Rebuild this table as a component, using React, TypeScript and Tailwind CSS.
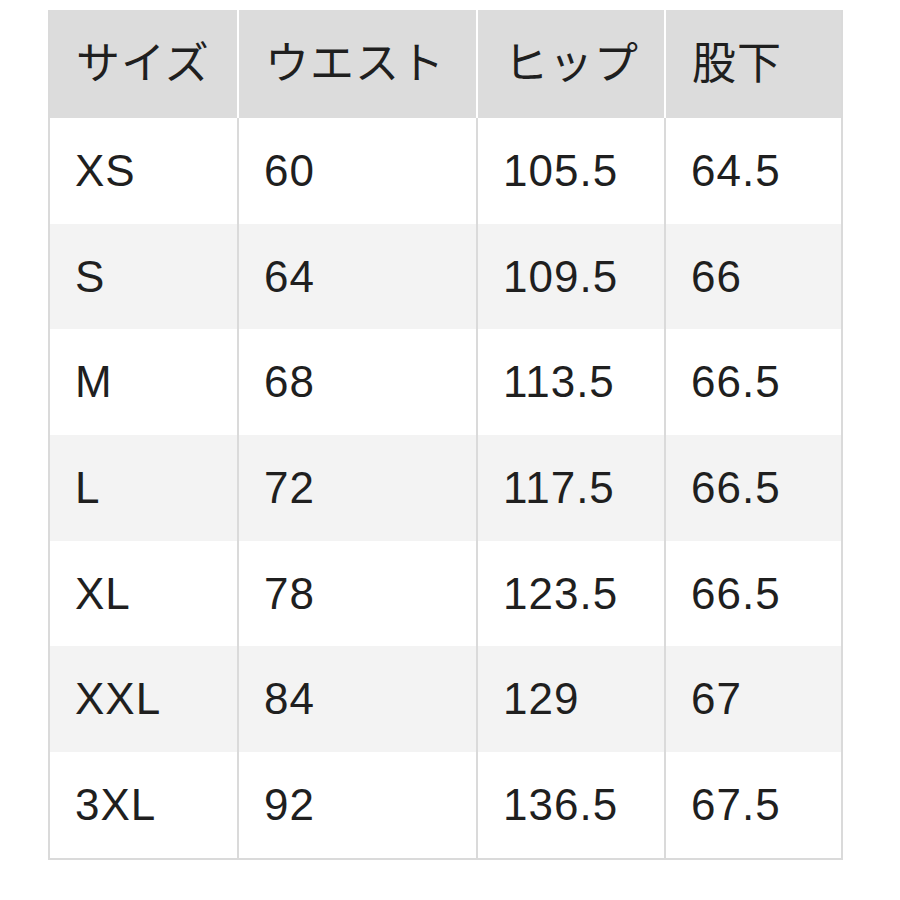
const header = ['サイズ', 'ウエスト', 'ヒップ', '股下'];

const rows = [
  ['XS', '60', '105.5', '64.5'],
  ['S', '64', '109.5', '66'],
  ['M', '68', '113.5', '66.5'],
  ['L', '72', '117.5', '66.5'],
  ['XL', '78', '123.5', '66.5'],
  ['XXL', '84', '129', '67'],
  ['3XL', '92', '136.5', '67.5'],
];

const cols = 'grid grid-cols-[187px_239px_188px_177px]';

export default function App() {
  return (
    <div className="w-[900px] h-[900px] bg-white pt-[10px] pl-[48px] font-['Liberation_Sans','Noto_Sans_CJK_JP',sans-serif] text-[#1f1f1f]">
      <div className="w-[795px] border-2 border-[#dadada] border-t-0">
        {/* Header */}
        <div className={`${cols} h-[108px] bg-[#dcdcdc]`}>
          {header.map((h, i) => (
            <div
              key={h}
              className={`flex items-center pl-[26px] text-[44px] tracking-[1px] ${i > 0 ? 'border-l-2 border-white' : ''}`}
            >
              {h}
            </div>
          ))}
        </div>

        {/* Body */}
        {rows.map((r, ri) => (
          <div
            key={r[0]}
            className={`${cols} h-[105.7px] ${ri % 2 === 1 ? 'bg-[#f3f3f3]' : 'bg-white'}`}
          >
            {r.map((c, ci) => (
              <div
                key={ci}
                className={`flex items-center pl-[25px] text-[44px] tracking-[1px] ${ci > 0 ? 'border-l-2 border-[#dadada]' : ''}`}
              >
                {c}
              </div>
            ))}
          </div>
        ))}
      </div>
    </div>
  );
}
